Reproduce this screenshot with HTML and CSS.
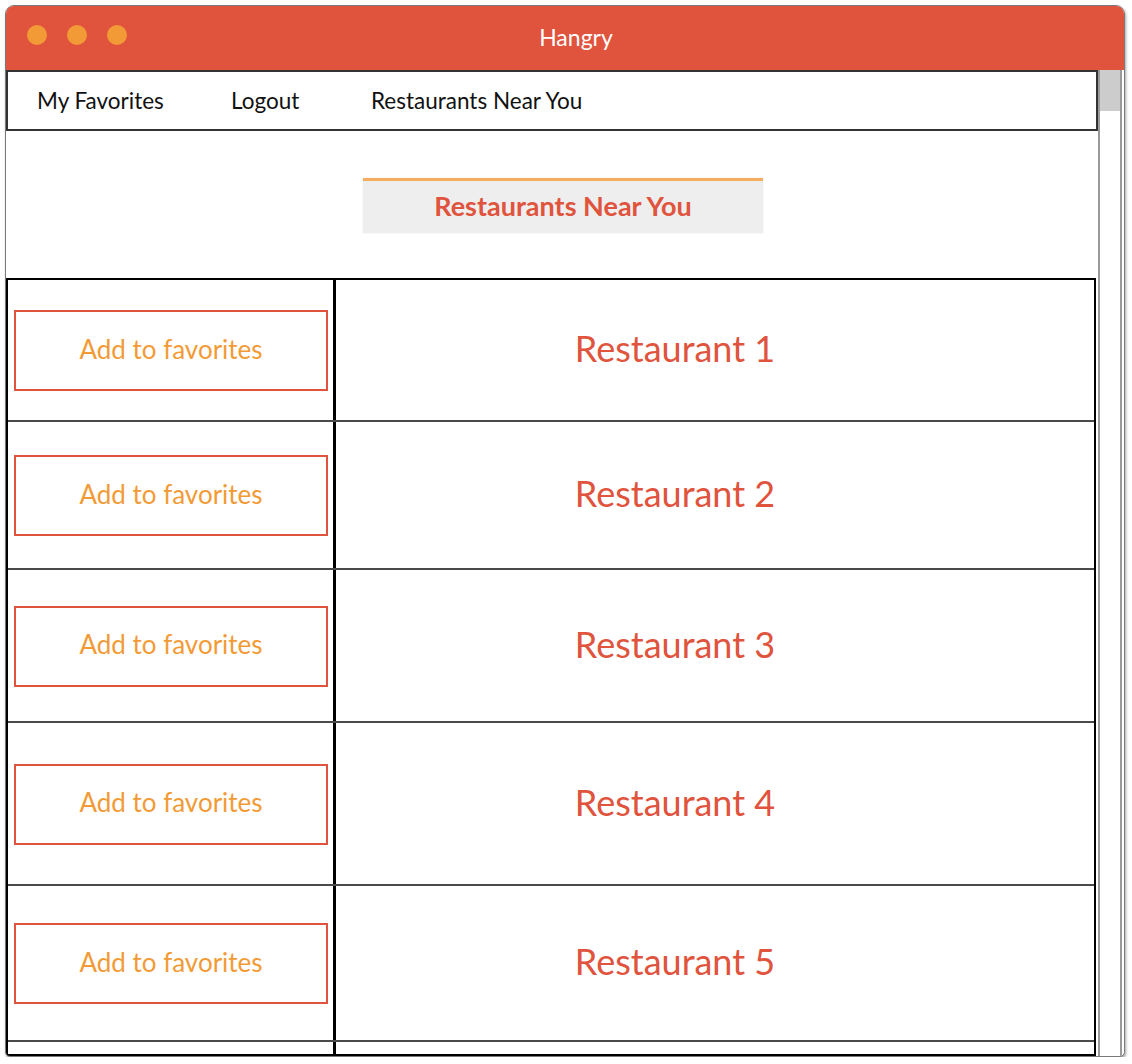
FILE: index.html
```html
<!DOCTYPE html>
<html>
<head>
<meta charset="utf-8">
<link rel="stylesheet" href="styles.css">
</head>
<body>
<div class="window">
  <div class="titlebar">
    <div class="dots"><span class="dot"></span><span class="dot"></span><span class="dot"></span></div>
    <div class="title">Hangry</div>
  </div>
  <div class="frame">
    <div class="content">
      <nav class="nav">
        <a class="nav-link">My Favorites</a>
        <a class="nav-link">Logout</a>
        <a class="nav-link">Restaurants Near You</a>
      </nav>
      <div class="heading-wrap">
        <h1 class="heading">Restaurants Near You</h1>
      </div>
      <div class="table">
        <div class="row r1"><div class="cell-left"><button class="fav">Add to favorites</button></div><div class="cell-right">Restaurant 1</div></div>
        <div class="row r2"><div class="cell-left"><button class="fav">Add to favorites</button></div><div class="cell-right">Restaurant 2</div></div>
        <div class="row r3"><div class="cell-left"><button class="fav">Add to favorites</button></div><div class="cell-right">Restaurant 3</div></div>
        <div class="row r4"><div class="cell-left"><button class="fav">Add to favorites</button></div><div class="cell-right">Restaurant 4</div></div>
        <div class="row r5"><div class="cell-left"><button class="fav">Add to favorites</button></div><div class="cell-right">Restaurant 5</div></div>
        <div class="row r6"><div class="cell-left"></div><div class="cell-right"></div></div>
      </div>
    </div>
    <div class="scrollbar"><div class="thumb"></div></div>
  </div>
</div>
</body>
</html>
```

FILE: styles.css
```css
html, body {
  margin: 0;
  padding: 0;
  background: #fff;
}
body {
  font-family: "Lato", "Noto Sans", sans-serif;
  padding: 5px 0 0 5px;
}
.window {
  width: 1118px;
  height: 1050px;
  border: 1px solid #7a7a7a;
  border-radius: 9px 9px 5px 5px;
  box-shadow: 1px 2px 3px rgba(0,0,0,0.35);
  overflow: hidden;
  display: flex;
  flex-direction: column;
  background: #fff;
}
.titlebar {
  height: 64px;
  background: #e0533d;
  position: relative;
  display: flex;
  align-items: center;
  justify-content: center;
  flex-shrink: 0;
}
.dots {
  position: absolute;
  left: 21px;
  top: 19px;
  display: flex;
  gap: 20px;
}
.dot {
  width: 20px;
  height: 20px;
  border-radius: 50%;
  background: #f29b36;
}
.title {
  color: #fff;
  font-size: 23px;
  margin-left: 22px;
  margin-top: -2px;
}
.frame {
  flex: 1;
  display: flex;
  min-height: 0;
}
.content {
  width: 1092px;
  display: flex;
  flex-direction: column;
}
.nav {
  height: 57px;
  border: 2px solid #333;
  display: flex;
  align-items: center;
  padding-left: 29px;
  box-sizing: content-box;
}
.nav-link {
  font-size: 22.5px;
  color: #111;
}
.nav-link:nth-child(1) { width: 194px; }
.nav-link:nth-child(2) { width: 140px; }
.heading-wrap {
  height: 147px;
  padding-left: 357px;
  padding-top: 47px;
  box-sizing: border-box;
}
.heading {
  margin: 0;
  width: 400px;
  height: 55px;
  background: #eeeeee;
  border-top: 3px solid #f3ad5c;
  box-shadow: 0 0 2px rgba(0,0,0,0.08);
  color: #e0533d;
  font-size: 27px;
  font-weight: bold;
  display: flex;
  align-items: center;
  justify-content: center;
  padding-bottom: 4px;
  box-sizing: border-box;
}
.table {
  width: 1090px;
  border: 2px solid #000;
  box-sizing: border-box;
  flex: 1;
  display: flex;
  flex-direction: column;
  overflow: hidden;
}
.row {
  display: flex;
  border-bottom: 2px solid #4a4a4a;
  flex-shrink: 0;
  box-sizing: border-box;
}
.r1 { height: 142px; }
.r2 { height: 148px; }
.r3 { height: 153px; }
.r4 { height: 163px; }
.r5 { height: 156px; }
.r6 { flex: 1; border-bottom: none; height: auto; }
.cell-left {
  width: 328px;
  border-right: 3px solid #000;
  display: flex;
  align-items: center;
  padding-left: 6px;
  box-sizing: border-box;
  flex-shrink: 0;
}
.cell-right {
  flex: 1;
  display: flex;
  align-items: center;
  justify-content: center;
  padding-right: 80px;
  padding-bottom: 4px;
  color: #e0533d;
  font-size: 36px;
}
.fav {
  width: 314px;
  height: 81px;
  border: 2px solid #e0533d;
  background: #fff;
  color: #f29b36;
  font-family: "Lato", "Noto Sans", sans-serif;
  font-size: 26px;
  padding: 0 0 4px 0;
  margin-top: 1px;
}
.scrollbar {
  flex: 1;
  border-left: 2px solid #9a9a9a;
  border-right: 2px solid #9a9a9a;
  background: #fff;
  margin-right: 2px;
}
.thumb {
  height: 41px;
  background: #cccccc;
}
```
